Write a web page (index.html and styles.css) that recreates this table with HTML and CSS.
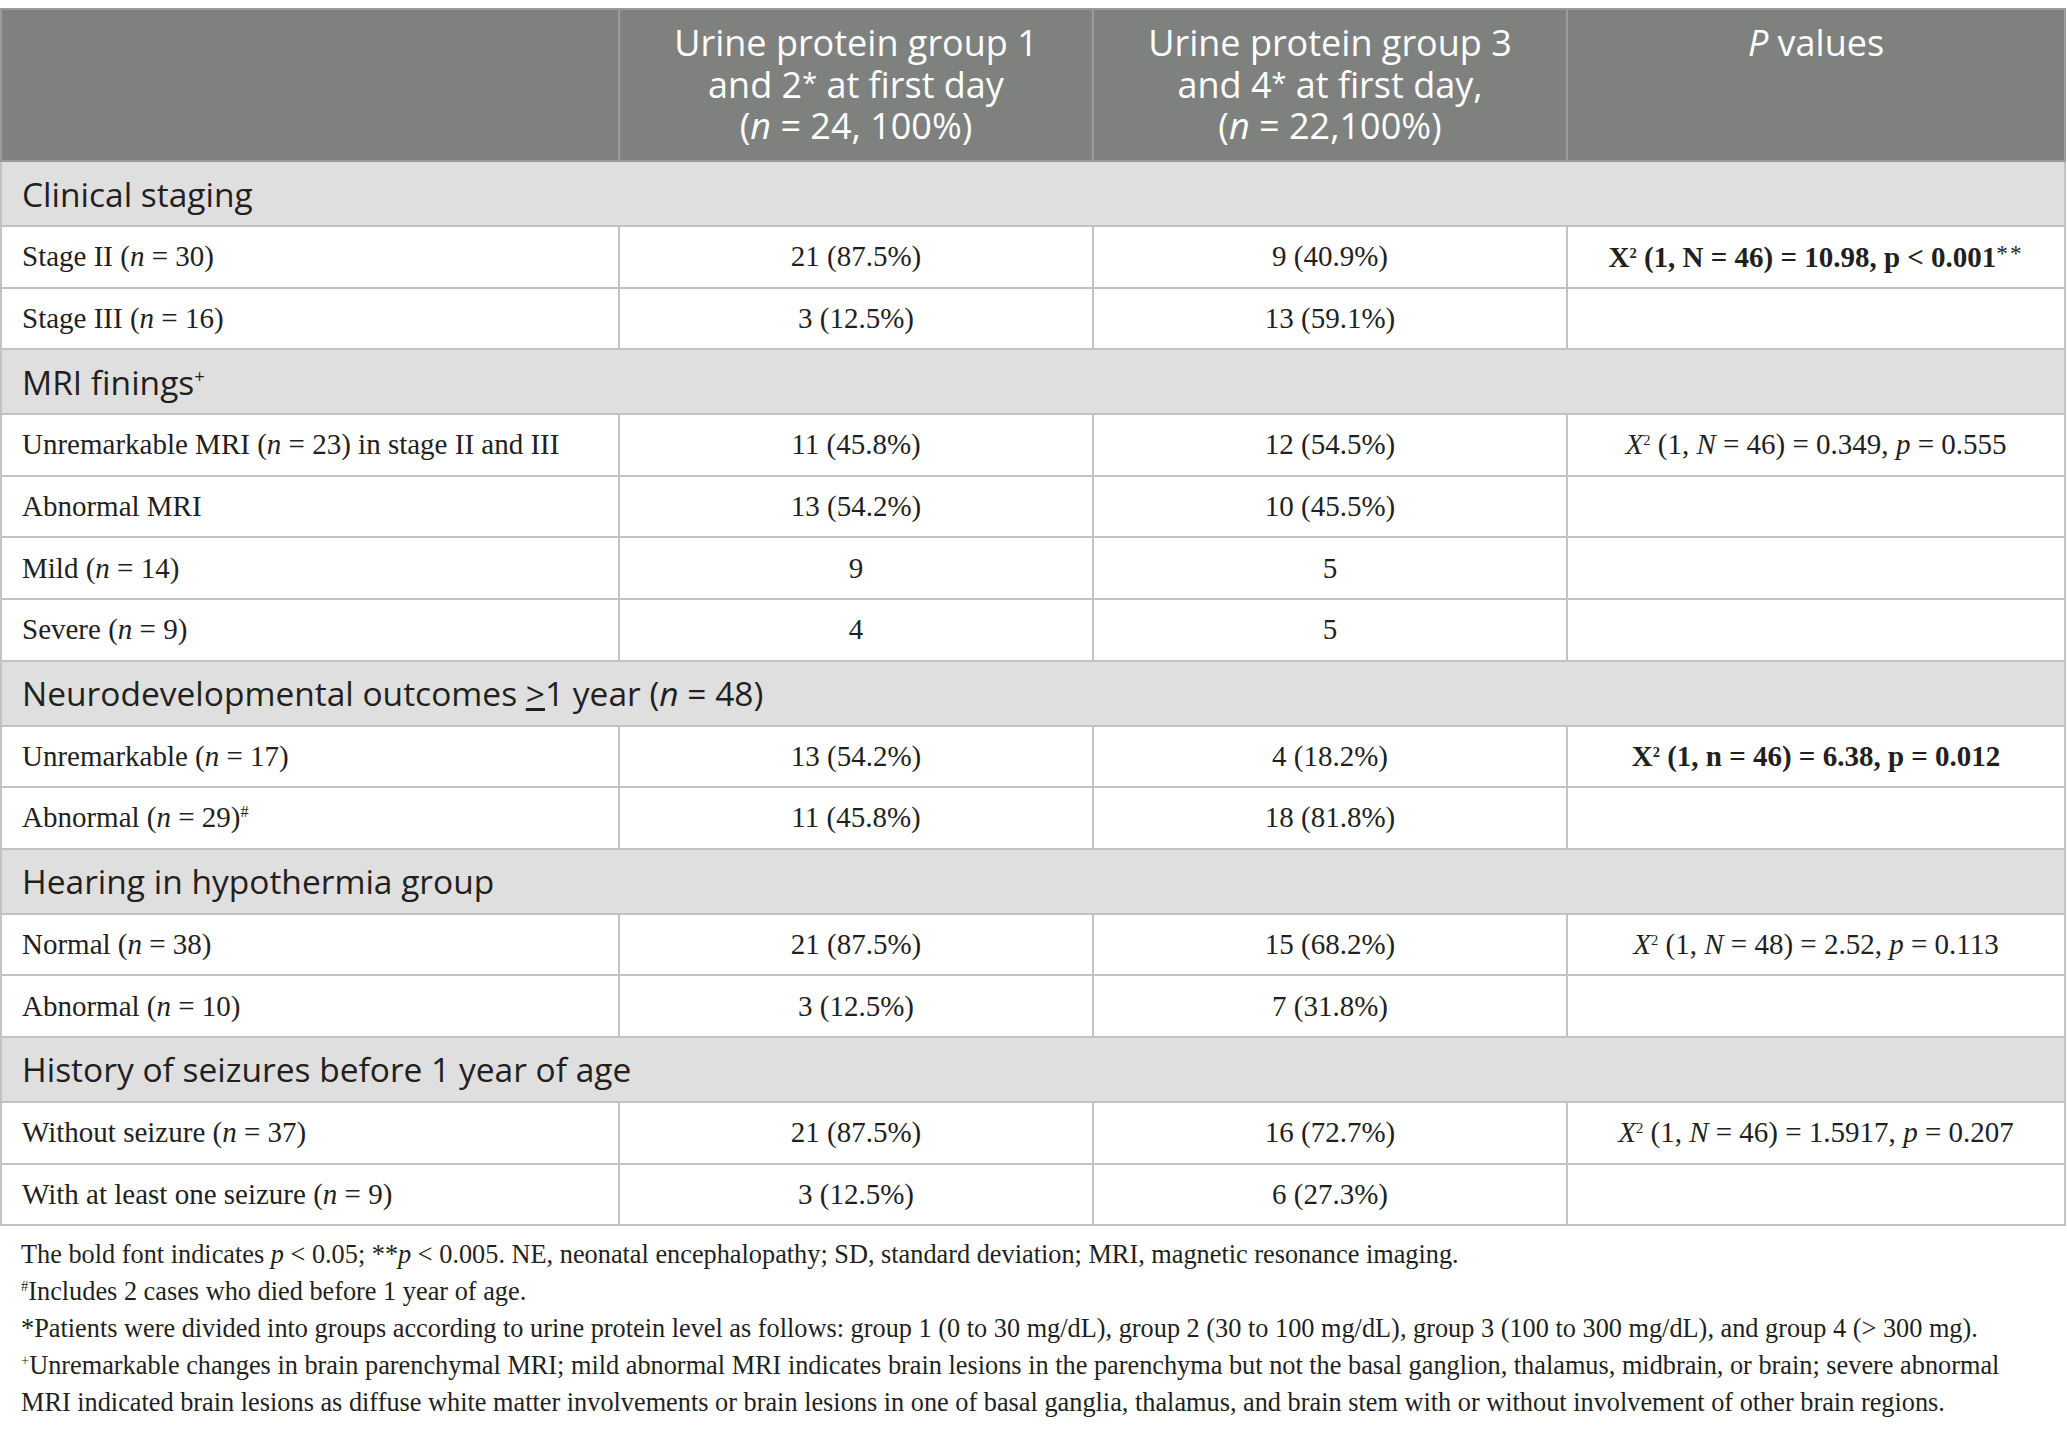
FILE: index.html
```html
<!DOCTYPE html>
<html lang="en">
<head>
  <meta charset="UTF-8">
  <meta name="viewport" content="width=device-width, initial-scale=1.0">
  <title>Urine protein and outcomes</title>
  <link rel="stylesheet" href="styles.css">
</head>
<body>

  <table class="results">
    <thead>
      <tr>
        <th class="label-col"></th>
        <th>Urine protein group 1<br>and 2<sup class="ast">*</sup> at first day<br>(<i>n</i> = 24, 100%)</th>
        <th>Urine protein group 3<br>and 4<sup class="ast">*</sup> at first day,<br>(<i>n</i> = 22,100%)</th>
        <th><i>P</i> values</th>
      </tr>
    </thead>
    <tbody>
      <tr class="section"><td colspan="4">Clinical staging</td></tr>
      <tr>
        <td>Stage II (<i>n</i> = 30)</td>
        <td>21 (87.5%)</td>
        <td>9 (40.9%)</td>
        <td class="stat"><b>X<sup>2</sup> (1, N = 46) = 10.98, p &lt; 0.001</b><span class="ast">**</span></td>
      </tr>
      <tr>
        <td>Stage III (<i>n</i> = 16)</td>
        <td>3 (12.5%)</td>
        <td>13 (59.1%)</td>
        <td></td>
      </tr>

      <tr class="section"><td colspan="4">MRI finings<sup>+</sup></td></tr>
      <tr>
        <td>Unremarkable MRI (<i>n</i> = 23) in stage II and III</td>
        <td>11 (45.8%)</td>
        <td>12 (54.5%)</td>
        <td class="stat"><i>X</i><sup>2</sup> (1, <i>N</i> = 46) = 0.349, <i>p</i> = 0.555</td>
      </tr>
      <tr>
        <td>Abnormal MRI</td>
        <td>13 (54.2%)</td>
        <td>10 (45.5%)</td>
        <td></td>
      </tr>
      <tr>
        <td>Mild (<i>n</i> = 14)</td>
        <td>9</td>
        <td>5</td>
        <td></td>
      </tr>
      <tr>
        <td>Severe (<i>n</i> = 9)</td>
        <td>4</td>
        <td>5</td>
        <td></td>
      </tr>

      <tr class="section"><td colspan="4">Neurodevelopmental outcomes <u>&gt;</u>1 year (<i>n</i> = 48)</td></tr>
      <tr>
        <td>Unremarkable (<i>n</i> = 17)</td>
        <td>13 (54.2%)</td>
        <td>4 (18.2%)</td>
        <td class="stat"><b>X<sup>2</sup> (1, n = 46) = 6.38, p = 0.012</b></td>
      </tr>
      <tr>
        <td>Abnormal (<i>n</i> = 29)<sup>#</sup></td>
        <td>11 (45.8%)</td>
        <td>18 (81.8%)</td>
        <td></td>
      </tr>

      <tr class="section"><td colspan="4">Hearing in hypothermia group</td></tr>
      <tr>
        <td>Normal (<i>n</i> = 38)</td>
        <td>21 (87.5%)</td>
        <td>15 (68.2%)</td>
        <td class="stat"><i>X</i><sup>2</sup> (1, <i>N</i> = 48) = 2.52, <i>p</i> = 0.113</td>
      </tr>
      <tr>
        <td>Abnormal (<i>n</i> = 10)</td>
        <td>3 (12.5%)</td>
        <td>7 (31.8%)</td>
        <td></td>
      </tr>

      <tr class="section"><td colspan="4">History of seizures before 1 year of age</td></tr>
      <tr>
        <td>Without seizure (<i>n</i> = 37)</td>
        <td>21 (87.5%)</td>
        <td>16 (72.7%)</td>
        <td class="stat"><i>X</i><sup>2</sup> (1, <i>N</i> = 46) = 1.5917, <i>p</i> = 0.207</td>
      </tr>
      <tr>
        <td>With at least one seizure (<i>n</i> = 9)</td>
        <td>3 (12.5%)</td>
        <td>6 (27.3%)</td>
        <td></td>
      </tr>
    </tbody>
  </table>

  <div class="notes">
    <p>The bold font indicates <i>p</i> &lt; 0.05; **<i>p</i> &lt; 0.005. NE, neonatal encephalopathy; SD, standard deviation; MRI, magnetic resonance imaging.</p>
    <p><sup>#</sup>Includes 2 cases who died before 1 year of age.</p>
    <p>*Patients were divided into groups according to urine protein level as follows: group 1 (0 to 30 mg/dL), group 2 (30 to 100 mg/dL), group 3 (100 to 300 mg/dL), and group 4 (&gt; 300 mg).</p>
    <p><sup>+</sup>Unremarkable changes in brain parenchymal MRI; mild abnormal MRI indicates brain lesions in the parenchyma but not the basal ganglion, thalamus, midbrain, or brain; severe abnormal MRI indicated brain lesions as diffuse white matter involvements or brain lesions in one of basal ganglia, thalamus, and brain stem with or without involvement of other brain regions.</p>
  </div>

</body>
</html>
```

FILE: styles.css
```css
body {
  margin: 0;
  padding-top: 8px;
  background: #fff;
  color: #231f20;
  font-family: "Liberation Serif", "Times New Roman", serif;
}

.results {
  width: 2066px;
  border-collapse: collapse;
  font-size: 29px;
}

.results th,
.results td {
  border: 2px solid #c2c2c2;
  padding: 0 20px;
}

.results th {
  background-color: #7f817f;
  border-color: #9a9c9a;
  color: #fff;
  font-family: "Open Sans", sans-serif;
  font-weight: 400;
  font-size: 36px;
  line-height: 41.5px;
  vertical-align: top;
  text-align: center;
  padding-top: 12px;
  height: 138px;
}

.results th.label-col {
  width: 576px;
}

.results th:nth-child(2),
.results th:nth-child(3) {
  width: 432px;
}

.results td {
  height: 59.6px;
  text-align: center;
}

.results td:first-child {
  text-align: left;
}

.results .section td {
  background-color: #e0dfe0;
  font-family: "Open Sans", sans-serif;
  font-size: 33.5px;
  height: 63px;
  text-align: left;
}

sup {
  font-size: 0.55em;
  line-height: 0;
  vertical-align: 0.65em;
}

.ast {
  font-weight: normal;
  font-size: 0.8em;
  letter-spacing: 2px;
  vertical-align: 0.25em;
}

th sup.ast {
  font-size: 0.75em;
  letter-spacing: 0;
  vertical-align: 0.2em;
}

.stat sup {
  font-size: 0.5em;
}

.notes {
  padding: 10px 21px 0;
  font-size: 26.3px;
  line-height: 37px;
}

.notes p {
  margin: 0;
}
```
